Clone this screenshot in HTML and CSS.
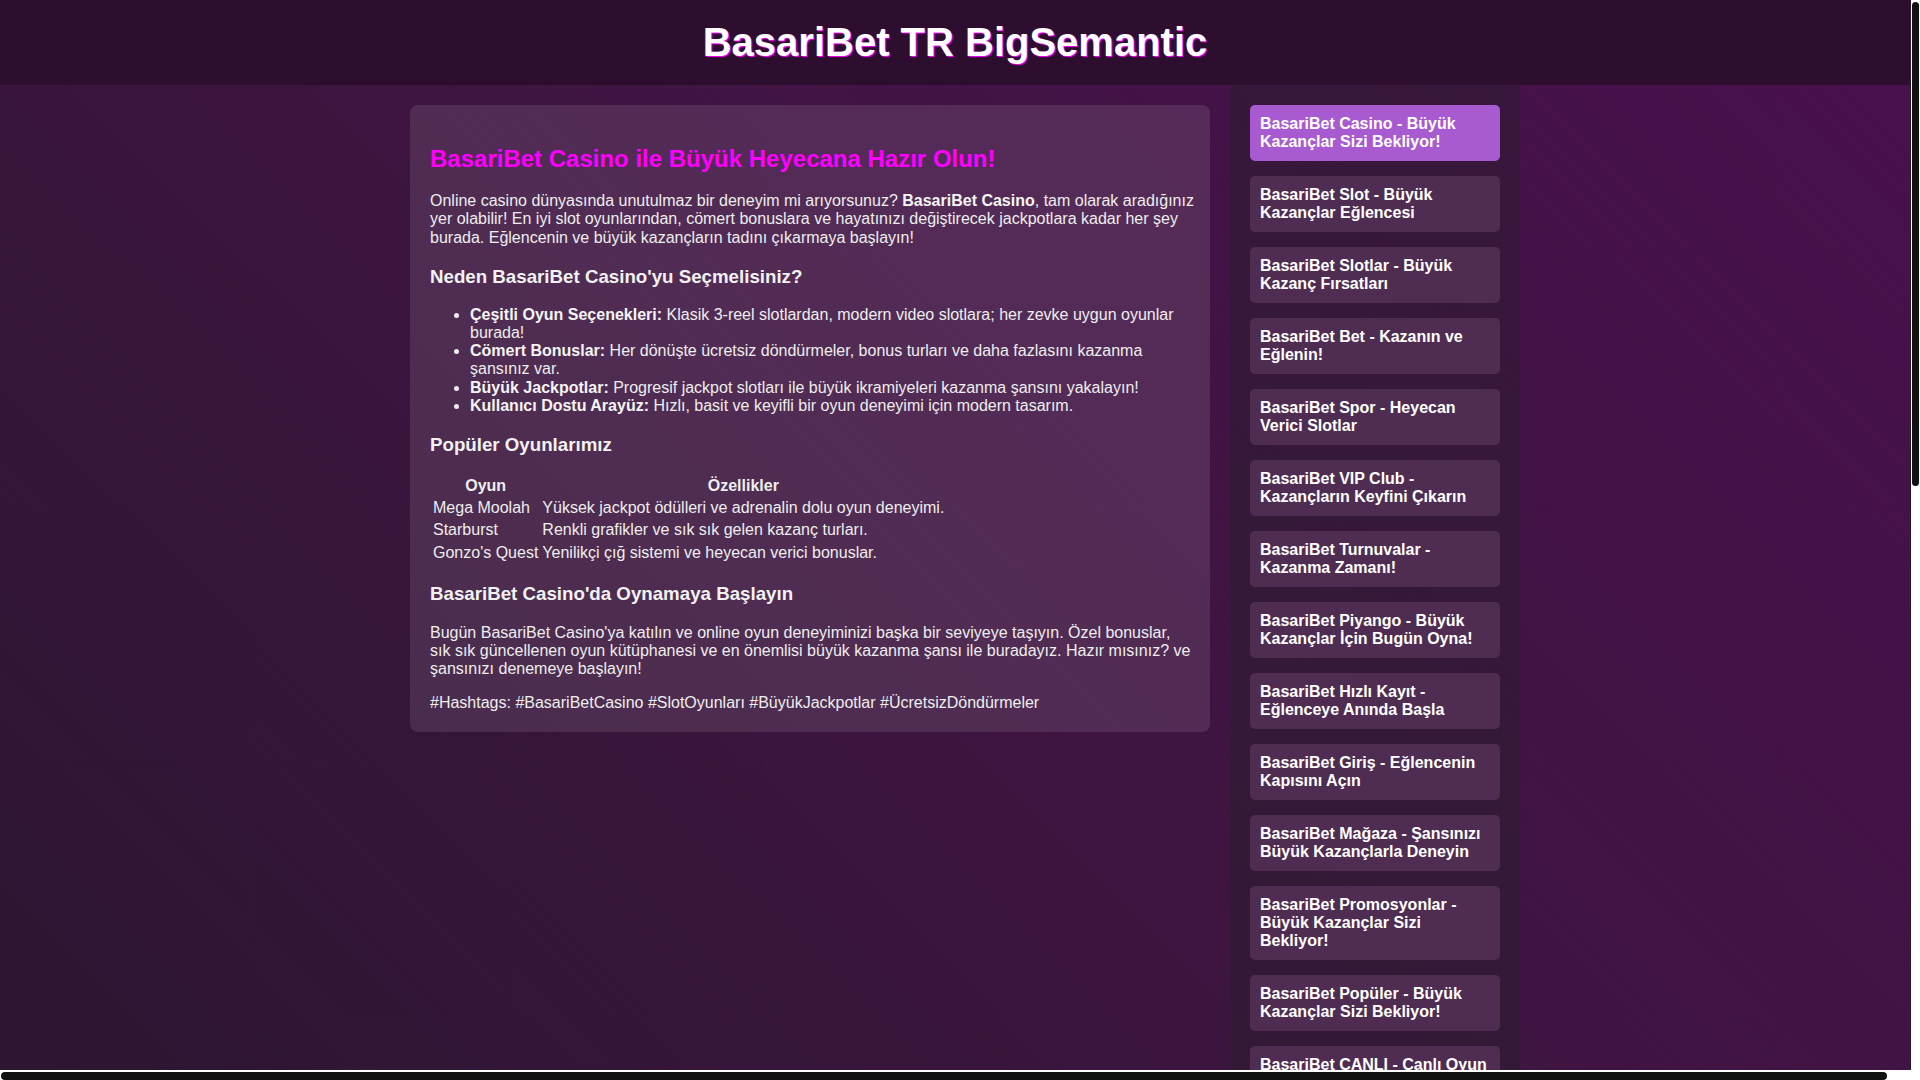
FILE: index.html
```html
<!DOCTYPE html>
<html lang="tr">
<head>
<meta charset="utf-8">
<title>BasariBet TR BigSemantic</title>
<link rel="stylesheet" href="styles.css">
</head>
<body>
<header class="site-header">
  <h1 class="site-title">BasariBet TR BigSemantic</h1>
</header>
<div class="page">
  <div class="layout">
    <main class="card">
      <h2 class="card-title">BasariBet Casino ile Büyük Heyecana Hazır Olun!</h2>
      <p>Online casino dünyasında unutulmaz bir deneyim mi arıyorsunuz? <strong>BasariBet Casino</strong>, tam olarak aradığınız yer olabilir! En iyi slot oyunlarından, cömert bonuslara ve hayatınızı değiştirecek jackpotlara kadar her şey burada. Eğlencenin ve büyük kazançların tadını çıkarmaya başlayın!</p>
      <h3>Neden BasariBet Casino'yu Seçmelisiniz?</h3>
      <ul>
        <li><strong>Çeşitli Oyun Seçenekleri:</strong> Klasik 3-reel slotlardan, modern video slotlara; her zevke uygun oyunlar burada!</li>
        <li><strong>Cömert Bonuslar:</strong> Her dönüşte ücretsiz döndürmeler, bonus turları ve daha fazlasını kazanma şansınız var.</li>
        <li><strong>Büyük Jackpotlar:</strong> Progresif jackpot slotları ile büyük ikramiyeleri kazanma şansını yakalayın!</li>
        <li><strong>Kullanıcı Dostu Arayüz:</strong> Hızlı, basit ve keyifli bir oyun deneyimi için modern tasarım.</li>
      </ul>
      <h3>Popüler Oyunlarımız</h3>
      <table class="games">
        <thead>
          <tr><th>Oyun</th><th>Özellikler</th></tr>
        </thead>
        <tbody>
          <tr><td>Mega Moolah</td><td>Yüksek jackpot ödülleri ve adrenalin dolu oyun deneyimi.</td></tr>
          <tr><td>Starburst</td><td>Renkli grafikler ve sık sık gelen kazanç turları.</td></tr>
          <tr><td>Gonzo's Quest</td><td>Yenilikçi çığ sistemi ve heyecan verici bonuslar.</td></tr>
        </tbody>
      </table>
      <h3>BasariBet Casino'da Oynamaya Başlayın</h3>
      <p>Bugün BasariBet Casino'ya katılın ve online oyun deneyiminizi başka bir seviyeye taşıyın. Özel bonuslar, sık sık güncellenen oyun kütüphanesi ve en önemlisi büyük kazanma şansı ile buradayız. Hazır mısınız? ve şansınızı denemeye başlayın!</p>
      <p>#Hashtags: #BasariBetCasino #SlotOyunları #BüyükJackpotlar #ÜcretsizDöndürmeler</p>
    </main>
    <aside class="sidebar">
      <nav class="side-nav">
        <a class="side-link active" href="#">BasariBet Casino - Büyük Kazançlar Sizi Bekliyor!</a>
        <a class="side-link" href="#">BasariBet Slot - Büyük Kazançlar Eğlencesi</a>
        <a class="side-link" href="#">BasariBet Slotlar - Büyük Kazanç Fırsatları</a>
        <a class="side-link" href="#">BasariBet Bet - Kazanın ve Eğlenin!</a>
        <a class="side-link" href="#">BasariBet Spor - Heyecan Verici Slotlar</a>
        <a class="side-link" href="#">BasariBet VIP Club - Kazançların Keyfini Çıkarın</a>
        <a class="side-link" href="#">BasariBet Turnuvalar - Kazanma Zamanı!</a>
        <a class="side-link" href="#">BasariBet Piyango - Büyük Kazançlar İçin Bugün Oyna!</a>
        <a class="side-link" href="#">BasariBet Hızlı Kayıt - Eğlenceye Anında Başla</a>
        <a class="side-link" href="#">BasariBet Giriş - Eğlencenin Kapısını Açın</a>
        <a class="side-link" href="#">BasariBet Mağaza - Şansınızı Büyük Kazançlarla Deneyin</a>
        <a class="side-link" href="#">BasariBet Promosyonlar - Büyük Kazançlar Sizi Bekliyor!</a>
        <a class="side-link" href="#">BasariBet Popüler - Büyük Kazançlar Sizi Bekliyor!</a>
        <a class="side-link" href="#">BasariBet CANLI - Canlı Oyun Heyecanı</a>
        <a class="side-link" href="#">BasariBet Mobil - Her Yerde Kazanın</a>
        <a class="side-link" href="#">BasariBet Bonus - Büyük Kazançlar Sizi Bekliyor!</a>
        <a class="side-link" href="#">BasariBet Jackpot - Büyük İkramiyeler</a>
        <a class="side-link" href="#">BasariBet Rulet - Şansınızı Deneyin</a>
        <a class="side-link" href="#">BasariBet Blackjack - Kazanmanın Keyfi</a>
        <a class="side-link" href="#">BasariBet Poker - Büyük Turnuvalar</a>
        <a class="side-link" href="#">BasariBet Bakara - Klasik Casino Heyecanı</a>
        <a class="side-link" href="#">BasariBet Canlı Casino - Gerçek Krupiyeler</a>
        <a class="side-link" href="#">BasariBet Yeni Oyunlar - Hemen Keşfedin</a>
        <a class="side-link" href="#">BasariBet Freespin - Fırsatları Kaçırmayın</a>
        <a class="side-link" href="#">BasariBet Para Yatırma - Hızlı ve Güvenli</a>
        <a class="side-link" href="#">BasariBet Para Çekme - Kazançlarınızı Alın</a>
        <a class="side-link" href="#">BasariBet Güncel Giriş - Kesintisiz Erişim</a>
        <a class="side-link" href="#">BasariBet Mobil Uygulama - Her Yerde Oyna</a>
        <a class="side-link" href="#">BasariBet Destek - 7/24 Yardım</a>
        <a class="side-link" href="#">BasariBet Yorumlar - Oyuncu Deneyimleri</a>
        <a class="side-link" href="#">BasariBet Sadakat - Ödüller Kazanın</a>
      </nav>
    </aside>
  </div>
</div>
<div class="fake-scroll fake-scroll-v" aria-hidden="true"><div class="fake-thumb fake-thumb-v"></div></div>
<div class="fake-scroll fake-scroll-h" aria-hidden="true"><div class="fake-thumb fake-thumb-h"></div></div>
</body>
</html>
```

FILE: styles.css
```css
html {
  background: #2e1531;
  scrollbar-width: none;
}

html::-webkit-scrollbar {
  display: none;
}

body {
  margin: 0 10px 0 0;
  font-family: "Liberation Sans", Arial, sans-serif;
  font-size: 16px;
  line-height: 1.125;
  color: #eeeeee;
  background: linear-gradient(45deg, #2c1631 0%, #3d1540 45%, #49104d 100%);
  background-attachment: fixed;
  min-height: 100vh;
}

.site-header {
  background: #2d0e2e;
  padding: 20px 0;
  text-align: center;
}

.site-title {
  margin: 0;
  font-size: 40px;
  line-height: 45px;
  font-weight: bold;
  color: #ffffff;
  text-shadow: 1px 1px 1px #ff00ff;
}

.page {
  width: calc(100% + 20px);
}

.layout {
  width: 1110px;
  margin: 0 auto;
  display: flex;
  gap: 20px;
  align-items: stretch;
}

.card {
  width: 800px;
  box-sizing: border-box;
  flex: none;
  align-self: flex-start;
  margin-top: 20px;
  padding: 20px 16px 20px 20px;
  background: rgba(255, 255, 255, 0.1);
  border-radius: 8px;
  line-height: 1.14;
}

.card > :last-child {
  margin-bottom: 0;
}

.card-title {
  color: #ff00ff;
  font-size: 24px;
  margin: 19.92px 0;
}

.card h3 {
  color: #f2f2f2;
}

.card p,
.card li {
  color: #eeeeee;
}

.card strong,
.card th {
  color: #f4f4f4;
}

.games td,
.games th {
  color: #eeeeee;
}

.sidebar {
  width: 290px;
  box-sizing: border-box;
  flex: none;
  padding: 20px;
  background: rgba(40, 30, 44, 0.45);
}

.side-nav {
  display: flex;
  flex-direction: column;
  gap: 15px;
}

.side-link {
  display: block;
  padding: 10px;
  background: #4f2d53;
  border-radius: 5px;
  color: #ffffff;
  font-weight: bold;
  line-height: 18px;
  text-decoration: none;
}

.side-link.active {
  background: #a85ad0;
}

/* decorative scrollbars drawn over the page edge, as in the reference */
.fake-scroll {
  position: fixed;
  background: #ffffff;
  z-index: 10;
}

.fake-scroll-v {
  top: 0;
  right: 0;
  width: 9px;
  bottom: 0;
}

.fake-scroll-h {
  left: 0;
  right: 9px;
  bottom: 0;
  height: 10px;
}

.fake-thumb {
  position: absolute;
  background: #111111;
  border-radius: 4px;
}

.fake-thumb-v {
  top: 2px;
  left: 1px;
  width: 7px;
  height: 484px;
}

.fake-thumb-h {
  left: 1px;
  bottom: 0;
  height: 8px;
  width: 1886px;
}
```
